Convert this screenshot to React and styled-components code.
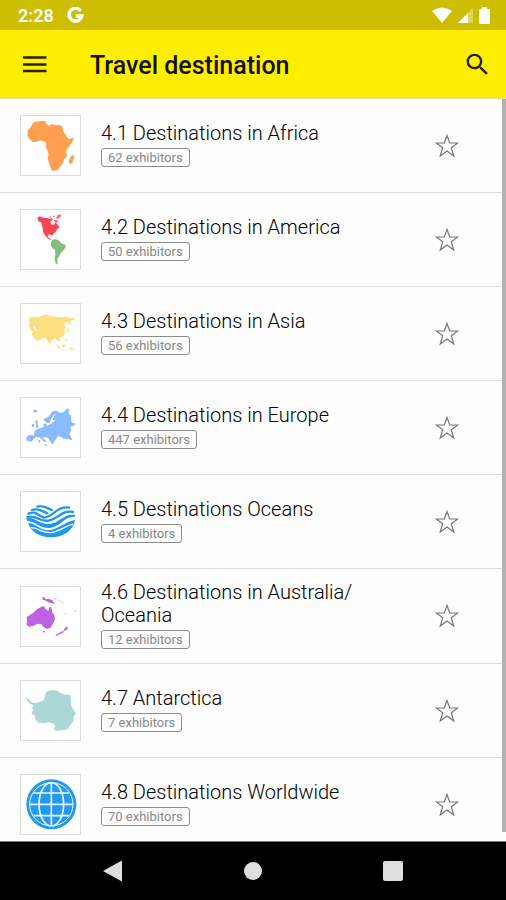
import React, { useState } from "react";
import styled, { createGlobalStyle } from "styled-components";

const GlobalStyle = createGlobalStyle`
  * {
    box-sizing: border-box;
  }
  body {
    margin: 0;
    background-color: #fdfdfd;
    font-family: Roboto, "Liberation Sans", sans-serif;
    color: #111;
  }
  button {
    padding: 0;
    border: 0;
    background: none;
    color: inherit;
    font: inherit;
    cursor: pointer;
  }
  svg {
    display: block;
  }
`;

const Screen = styled.div`
  height: 100vh;
  display: flex;
  flex-direction: column;
`;

const StatusBar = styled.div`
  flex: none;
  height: 30px;
  padding: 0 16px 0 18px;
  display: flex;
  align-items: center;
  justify-content: space-between;
  background-color: #cdbe00;
  color: #fff;
`;

const StatusGroup = styled.div`
  display: flex;
  align-items: center;
  gap: ${props => props.gap};
`;

const Clock = styled.span`
  padding-top: 2px;
  font-size: 18px;
  line-height: 28px;
  font-weight: 600;
`;

const Header = styled.header`
  flex: none;
  height: 69px;
  padding: 0 13px 0 19px;
  display: flex;
  align-items: center;
  background-color: #ffee00;
  border-bottom: 1px solid #e6dfa0;
`;

const HeaderButton = styled.button`
  width: 32px;
  height: 40px;
  display: flex;
  align-items: center;
  justify-content: center;
`;

const HeaderTitle = styled.h1`
  flex: 1;
  margin: 0;
  padding-left: 39px;
  padding-top: 3px;
  font-size: 25px;
  line-height: 32px;
  font-weight: 500;
`;

const Content = styled.main`
  position: relative;
  flex: 1;
  min-height: 0;
  border-bottom: 1px solid #777;
`;

const List = styled.ul`
  height: 100%;
  margin: 0;
  padding: 0;
  list-style: none;
  overflow-y: auto;
  scrollbar-width: none;
`;

const ScrollThumb = styled.div`
  position: absolute;
  top: 0;
  right: 0;
  bottom: 9px;
  width: 4px;
  background-color: #b2b2b2;
`;

const Row = styled.li`
  min-height: 94px;
  padding: 0 42px 0 20px;
  display: flex;
  align-items: center;
  border-bottom: 1px solid #dedede;
`;

const Thumb = styled.div`
  flex: none;
  width: 61px;
  height: 61px;
  border: 1px solid #dcdcdc;
  background-color: #fff;
`;

const Info = styled.a`
  flex: 1;
  padding: 12px 40px 14px 20px;
  color: inherit;
  text-decoration: none;
`;

const Title = styled.h2`
  margin: 0 0 3px;
  font-size: 20px;
  line-height: 23px;
  font-weight: 300;
  color: #000;
`;

const Badge = styled.span`
  display: block;
  width: fit-content;
  padding: 0 6px;
  border: 1px solid #8c8c8c;
  border-radius: 3px;
  font-size: 13px;
  line-height: 17px;
  color: #888;
`;

const StarButton = styled.button`
  flex: none;
  width: 34px;
  height: 40px;
  display: flex;
  align-items: center;
  justify-content: center;
`;

const NavBar = styled.nav`
  flex: none;
  height: 58px;
  display: flex;
  align-items: center;
  justify-content: center;
  gap: 80px;
  background-color: #000;
`;

const NavButton = styled.button`
  width: 60px;
  height: 48px;
  display: flex;
  align-items: center;
  justify-content: center;
`;

const MapIcon = ({ top = 30, children }) => (
  <svg width="100%" height="100%" viewBox={`33 ${top} 177 177`} aria-hidden="true">
    {children}
  </svg>
);

const Africa = () => (
  <MapIcon top={33}>
    <g fill="#ffa050">
      <path d="M76 50L92 49L104 47L108 50L107 55L118 62L124 57L133 60L153 61L157 67L159 77L167 90L175 102L191 98L190 106L181 119L170 132L168 143L172 153L162 162L160 171L152 184L143 195L126 198L122 188L117 173L113 161L116 147L112 135L107 126L109 115L103 109L91 106L78 111L68 111L58 101L52 91L54 75L63 65L69 53Z" />
      <path d="M189 149L193 155L187 174L179 178L177 168L181 156Z" />
    </g>
  </MapIcon>
);

const America = () => (
  <MapIcon>
    <path fill="#fb4552" d="M82 54L89 49L99 53L112 54L120 57L126 54L129 58L121 66L124 73L131 76L136 67L143 74L149 82L142 87L137 96L130 101L127 107L119 103L112 108L116 114L123 116L125 121L113 115L104 105L99 94L97 80L93 66L86 65Z" />
    <path fill="#fb6872" d="M126 47L137 48L131 51ZM138 56L143 45L155 43L151 51L143 57ZM130 59L140 60L146 67L139 68L132 63ZM116 50L123 49L122 53L116 53Z" />
    <path fill="#84bd7d" d="M128 119L138 117L150 124L153 130L168 135L165 145L159 153L152 160L148 168L143 175L142 186L144 195L137 190L134 176L136 163L135 150L127 144L122 135L124 124Z" />
  </MapIcon>
);

const Asia = () => (
  <MapIcon top={29}>
    <g fill="#fbdf80">
      <path d="M56 72L69 67L86 68L94 65L107 60L119 65L137 67L152 69L169 67L182 71L195 71L192 77L181 80L183 88L177 92L174 82L166 84L162 91L168 99L163 105L165 116L160 125L153 130L146 128L151 137L147 142L140 135L134 132L126 137L120 148L114 143L108 132L98 132L91 138L79 139L71 129L65 121L68 111L61 107L57 93L60 84Z" />
      <path d="M174 102L180 99L174 111L166 115ZM140 147L146 154L151 162L147 163L141 156ZM154 154L163 148L166 155L160 161ZM165 133L170 138L169 143L165 140ZM150 163L161 165L159 168ZM175 159L188 162L193 168L184 168Z" />
    </g>
    <path fill="#fff" d="M66 97L74 94L79 104L83 111L76 110L71 101Z" opacity=".7" />
  </MapIcon>
);

const Europe = () => (
  <MapIcon top={29}>
    <g fill="#8abaff">
      <path d="M69 64L80 65L82 70L74 74ZM75 97L83 96L83 108L86 117L77 120L79 109ZM66 107L73 107L71 116L65 115Z" />
      <path d="M119 82L127 69L140 67L150 74L161 72L171 60L178 64L176 76L183 82L184 101L197 107L190 113L181 114L184 126L178 136L184 148L188 156L173 152L160 151L152 145L143 144L137 154L132 160L127 169L122 161L116 151L107 145L98 148L111 160L103 161L91 148L78 145L71 152L64 160L51 157L48 149L55 141L65 139L73 142L72 131L80 123L93 119L101 115L101 106L109 106L111 113L122 107L130 101L136 96L128 95L132 84L139 77L130 81L122 94L119 104L111 103L105 98L99 97L103 91L113 87ZM101 168L112 169L109 174ZM86 154L91 156L89 164L85 161Z" />
    </g>
  </MapIcon>
);

const Oceans = () => (
  <MapIcon top={29}>
    <g fill="none" stroke="#1d98f1" strokeWidth="7" strokeLinecap="round">
      <path d="M82 73C98 67 112 77 125 83" />
      <path d="M66 83C86 75 98 88 112 93" />
      <path d="M55 94C75 84 84 99 99 104" />
      <path d="M100 106C124 108 143 69 177 76" />
      <path d="M52 104C76 96 88 119 115 115C145 109 157 82 189 89" />
    </g>
    <path
      fill="#1d98f1"
      d="M49 107C73 101 87 128 119 125C149 121 163 91 196 98L194 103C165 101 152 131 121 137C90 139 77 117 52 116Z"
    />
    <path
      fill="#1d98f1"
      d="M54 122C77 122 91 147 121 143C151 138 168 116 195 113C190 143 163 164 124 165C87 165 63 148 54 122Z"
    />
    <path fill="none" stroke="#fff" strokeWidth="4" d="M62 136C85 136 100 155 127 150C150 146 170 128 189 126" />
  </MapIcon>
);

const Australia = () => (
  <MapIcon top={33}>
    <g fill="#bf60e5">
      <path d="M94 92L103 91L106 98L115 105L119 92L124 94L127 109L133 118L135 129L129 143L121 156L110 159L101 153L94 145L82 143L71 149L58 152L50 147L51 131L50 123L60 117L70 111L78 103L84 98Z" />
      <path d="M97 64L104 64L106 70L115 68L127 73L132 81L138 85L126 82L115 79L105 73L98 72ZM98 165L105 165L102 172ZM169 152L174 153L172 160L164 165L160 162ZM159 164L162 168L151 174L138 180L136 177L149 170Z" />
    </g>
    <path fill="none" stroke="#b9a6c2" strokeWidth="2" d="M131 70L141 67M144 71L160 82M163 112L168 117M195 102L197 108" />
  </MapIcon>
);

const Antarctica = () => (
  <MapIcon top={32}>
    <path fill="#abd8d5" d="M45 78L51 84L62 92L68 97L80 98L93 93L100 91L104 79L108 66L119 60L139 60L151 67L166 73L181 75L183 91L184 108L191 119L198 130L190 139L191 151L181 163L174 176L160 180L138 181L130 177L136 168L130 160L117 156L102 159L87 157L77 149L73 135L66 132L65 125L70 121L66 114L70 105L60 100L50 89Z" />
  </MapIcon>
);

const Worldwide = () => (
  <MapIcon top={33}>
    <circle cx="124" cy="121" r="75" fill="#2499f2" />
    <g fill="none" stroke="#e6f8ff" strokeWidth="5">
      <circle cx="124" cy="121" r="65" strokeWidth="3" />
      <ellipse cx="124" cy="121" rx="37" ry="65" />
      <path d="M124 56V186M59 121H189M71 87H177M71 155H177" />
    </g>
  </MapIcon>
);

const GoogleIcon = () => (
  <svg width="17" height="17" viewBox="0 0 17 17" aria-hidden="true">
    <path d="M13.8 4A6.4 6.4 0 1 0 14.8 9H8.8" fill="none" stroke="currentColor" strokeWidth="3.400" />
  </svg>
);

const WifiIcon = () => (
  <svg width="20" height="17" viewBox="0 0 20 17" aria-hidden="true">
    <path fill="currentColor" d="M0 4Q10-3 20 4L10 16Z" />
  </svg>
);

const SignalIcon = () => (
  <svg width="15" height="17" viewBox="0 0 15 17" aria-hidden="true">
    <path fill="currentColor" opacity=".35" d="M0 16L15 1V16Z" />
    <path fill="currentColor" d="M0 16L10 6V16Z" />
  </svg>
);

const BatteryIcon = () => (
  <svg width="11" height="17" viewBox="0 0 11 17" aria-hidden="true">
    <path fill="currentColor" d="M3 0H8V2H10Q11 2 11 3V16Q11 17 10 17H1Q0 17 0 16V3Q0 2 1 2H3Z" />
  </svg>
);

const MenuIcon = () => (
  <svg width="24" height="18" viewBox="0 0 24 18" aria-hidden="true">
    <path d="M0 2.5H23.500M0 9.5H23.500M0 16H23.500" stroke="#252100" strokeWidth="2.400" />
  </svg>
);

const SearchIcon = () => (
  <svg width="29" height="29" viewBox="0 0 24 24" aria-hidden="true">
    <path
      fill="#252100"
      d="M15.5 14h-.79l-.28-.27A6.47 6.47 0 0 0 16 9.500 6.500 6.500 0 1 0 9.500 16c1.610 0 3.090-.59 4.230-1.570l.27.28v.79l5 4.990L20.490 19l-4.990-5zm-6 0C7.010 14 5 11.990 5 9.500S7.010 5 9.500 5 14 7.010 14 9.500 11.990 14 9.500 14z"
    />
  </svg>
);

const StarIcon = ({ filled }) => (
  <svg width="24" height="24" viewBox="0 0 24 24" aria-hidden="true">
    <path
      d="M12 1.500L14.700 9H22.700L16.300 13.700L18.700 22L12 17L5.300 22L7.700 13.700L1.300 9H9.300Z"
      fill={filled ? "#777" : "none"}
      stroke="#777"
      strokeWidth="1.200"
    />
  </svg>
);

const destinations = [
  { title: "4.1 Destinations in Africa", exhibitors: 62, Icon: Africa },
  { title: "4.2 Destinations in America", exhibitors: 50, Icon: America },
  { title: "4.3 Destinations in Asia", exhibitors: 56, Icon: Asia },
  { title: "4.4 Destinations in Europe", exhibitors: 447, Icon: Europe },
  { title: "4.5 Destinations Oceans", exhibitors: 4, Icon: Oceans },
  { title: "4.6 Destinations in Australia/ Oceania", exhibitors: 12, Icon: Australia },
  { title: "4.7 Antarctica", exhibitors: 7, Icon: Antarctica },
  { title: "4.8 Destinations Worldwide", exhibitors: 70, Icon: Worldwide }
];

const Destination = ({ title, exhibitors, Icon }) => {
  const [starred, setStarred] = useState(false);
  return (
    <Row>
      <Thumb>
        <Icon />
      </Thumb>
      <Info href="#">
        <Title>{title}</Title>
        <Badge>{exhibitors} exhibitors</Badge>
      </Info>
      <StarButton
        type="button"
        aria-label={`Bookmark ${title}`}
        aria-pressed={starred}
        onClick={() => setStarred(!starred)}
      >
        <StarIcon filled={starred} />
      </StarButton>
    </Row>
  );
};

export default () => (
  <Screen>
    <GlobalStyle />
    <StatusBar>
      <StatusGroup gap="13px">
        <Clock>2:28</Clock>
        <GoogleIcon />
      </StatusGroup>
      <StatusGroup gap="6px">
        <WifiIcon />
        <SignalIcon />
        <BatteryIcon />
      </StatusGroup>
    </StatusBar>
    <Header>
      <HeaderButton type="button" aria-label="Menu">
        <MenuIcon />
      </HeaderButton>
      <HeaderTitle>Travel destination</HeaderTitle>
      <HeaderButton type="button" aria-label="Search">
        <SearchIcon />
      </HeaderButton>
    </Header>
    <Content>
      <List>
        {destinations.map(item => (
          <Destination key={item.title} {...item} />
        ))}
      </List>
      <ScrollThumb />
    </Content>
    <NavBar>
      <NavButton type="button" aria-label="Back">
        <svg width="20" height="22" viewBox="0 0 20 22" aria-hidden="true">
          <path fill="#dedede" d="M0 11L18 1Q19 0 19 2V20Q19 22 18 21Z" />
        </svg>
      </NavButton>
      <NavButton type="button" aria-label="Home">
        <svg width="20" height="20" viewBox="0 0 20 20" aria-hidden="true">
          <circle cx="10" cy="10" r="9" fill="#dedede" />
        </svg>
      </NavButton>
      <NavButton type="button" aria-label="Recent apps">
        <svg width="20" height="20" viewBox="0 0 20 20" aria-hidden="true">
          <rect width="20" height="20" rx="2" fill="#dedede" />
        </svg>
      </NavButton>
    </NavBar>
  </Screen>
);
